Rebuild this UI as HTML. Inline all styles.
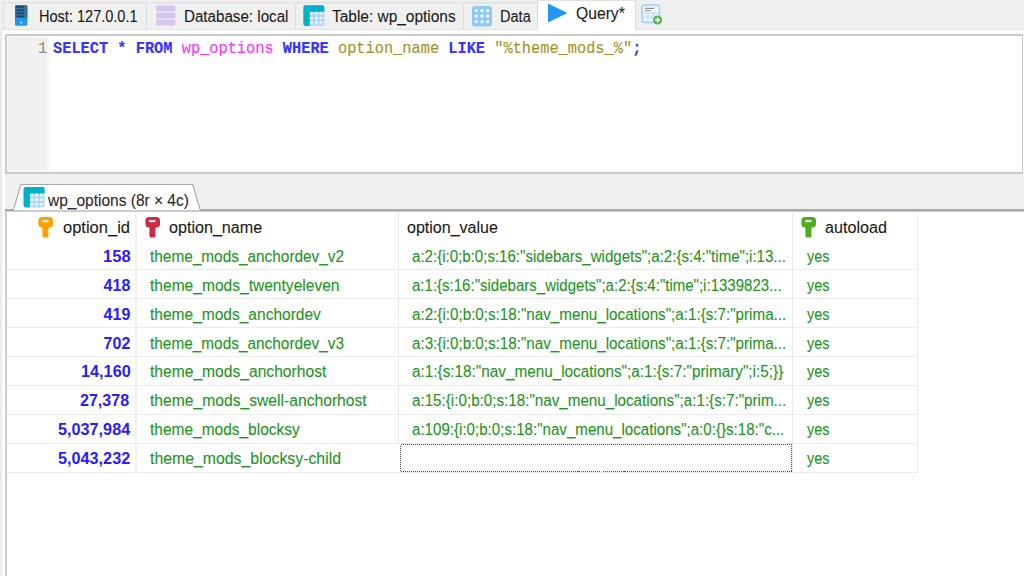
<!DOCTYPE html>
<html><head><meta charset='utf-8'>
<style>
html,body{margin:0;padding:0;width:1024px;height:576px;overflow:hidden;background:#fff;position:relative}
.t{position:absolute;white-space:pre;line-height:40px;height:40px;font-family:"Liberation Sans",sans-serif;transform-origin:0 0;-webkit-text-stroke:0.1px currentColor}
.a{position:absolute}
</style></head><body>
<!-- tab bar -->
<div class='a' style='left:0;top:0;width:1024px;height:30px;background:#efefef'></div>
<div class='a' style='left:0;top:29px;width:1024px;height:1px;background:#e3e3e3'></div>
<!-- inactive tabs strip -->
<div class='a' style='left:3px;top:2px;width:535px;height:27px;background:#f0f0f0;border-top:1px solid #e0e0e0;border-left:1px solid #dedede;box-sizing:border-box'></div>
<div class='a' style='left:4px;top:3px;width:534px;height:1px;background:#e9e9e9'></div>
<div class='a' style='left:146px;top:4px;width:1px;height:25px;background:#dcdcdc'></div>
<div class='a' style='left:295px;top:4px;width:1px;height:25px;background:#dcdcdc'></div>
<div class='a' style='left:463px;top:4px;width:1px;height:25px;background:#dcdcdc'></div>
<!-- active tab -->
<div class='a' style='left:537px;top:0;width:99px;height:34px;background:#fff;border-left:1px solid #dadada;border-right:1px solid #dadada;border-top:1px solid #e0e0e0;box-sizing:border-box'></div>
<div class='a' style='left:538px;top:29px;width:97px;height:5px;background:#fff'></div>
<!-- white band & left strip -->
<div class='a' style='left:0;top:30px;width:1024px;height:4px;background:#fff'></div>
<div class='a' style='left:0;top:30px;width:2px;height:546px;background:#e9e9e9'></div>
<svg style='position:absolute;left:13.9px;top:4.3px' width='15' height='23' viewBox='-1 -1 15 23'>
<rect x='0' y='0' width='12.4' height='20.8' rx='1.6' fill='#2196f3'/>
<path d='M1.6 0 H10.8 Q12.4 0 12.4 1.6 V12.9 H0 V1.6 Q0 0 1.6 0 Z' fill='#2e70ad'/>
<rect x='1.6' y='1.20' width='8.2' height='1.8' fill='#2a4560'/><rect x='9.3' y='1.20' width='1.6' height='1.8' fill='#3f8f52'/><rect x='1.6' y='4.40' width='8.2' height='1.8' fill='#2a4560'/><rect x='9.3' y='4.40' width='1.6' height='1.8' fill='#3f8f52'/><rect x='1.6' y='7.50' width='8.2' height='1.8' fill='#2a4560'/><rect x='9.3' y='7.50' width='1.6' height='1.8' fill='#3f8f52'/><rect x='1.6' y='10.50' width='8.2' height='1.8' fill='#2a4560'/><rect x='9.3' y='10.50' width='1.6' height='1.8' fill='#3f8f52'/>
<circle cx='6.3' cy='17.6' r='1.2' fill='#9fd1fb'/>
</svg>
<svg style='position:absolute;left:156px;top:5px' width='20' height='21' viewBox='0 0 20 21'>
<rect x='0' y='0.5' width='19.5' height='6' rx='2' fill='#d5c6ee'/>
<rect x='0' y='7.5' width='19.5' height='6' rx='2' fill='#d5c6ee'/>
<rect x='0' y='14.5' width='19.5' height='6' rx='2' fill='#d5c6ee'/>
</svg>
<svg style='position:absolute;left:303px;top:5px' width='23' height='23' viewBox='-0.40 -0.30 23 23'>
<rect x='0' y='0' width='21' height='20.7' rx='2' fill='#b9ddf9'/>
<path d='M10.55 6.5 V20.7 M15.3 6.5 V20.7 M6.3 10.5 H21 M6.3 15.0 H21' stroke='#a6d2f7' stroke-width='0.8'/>
<path d='M2 0 H19 Q21 0 21 2 V6.5 H6.3 V20.7 H2 Q0 20.7 0 18.7 V2 Q0 0 2 0 Z' fill='#00b4cc'/>
<path d='M6.3 0 V6.5 M10.55 0 V6.5 M15.3 0 V6.5 M0 6.5 H6.3 M0 10.7 H6.3 M0 15.2 H6.3' stroke='#06a0b5' stroke-width='0.8'/>
<rect x='6.90' y='6.90' width='2.4' height='2.4' rx='0.4' fill='#f6fbff'/><rect x='11.80' y='6.90' width='2.4' height='2.4' rx='0.4' fill='#f6fbff'/><rect x='16.40' y='6.90' width='2.4' height='2.4' rx='0.4' fill='#f6fbff'/><rect x='6.90' y='11.60' width='2.4' height='2.4' rx='0.4' fill='#f6fbff'/><rect x='11.80' y='11.60' width='2.4' height='2.4' rx='0.4' fill='#f6fbff'/><rect x='16.40' y='11.60' width='2.4' height='2.4' rx='0.4' fill='#f6fbff'/><rect x='6.90' y='16.10' width='2.4' height='2.4' rx='0.4' fill='#f6fbff'/><rect x='11.80' y='16.10' width='2.4' height='2.4' rx='0.4' fill='#f6fbff'/><rect x='16.40' y='16.10' width='2.4' height='2.4' rx='0.4' fill='#f6fbff'/>
</svg>
<svg style='position:absolute;left:472px;top:5.5px' width='21' height='21' viewBox='0 0 21 21'>
<rect x='0' y='0' width='20' height='20.5' rx='3' fill='#8cc9f8'/>
<rect x='2.75' y='2.95' width='3.1' height='3.1' rx='0.6' fill='#eef7ff'/><rect x='8.45' y='2.95' width='3.1' height='3.1' rx='0.6' fill='#eef7ff'/><rect x='14.05' y='2.95' width='3.1' height='3.1' rx='0.6' fill='#eef7ff'/><rect x='2.75' y='8.55' width='3.1' height='3.1' rx='0.6' fill='#eef7ff'/><rect x='8.45' y='8.55' width='3.1' height='3.1' rx='0.6' fill='#eef7ff'/><rect x='14.05' y='8.55' width='3.1' height='3.1' rx='0.6' fill='#eef7ff'/><rect x='2.75' y='14.15' width='3.1' height='3.1' rx='0.6' fill='#eef7ff'/><rect x='8.45' y='14.15' width='3.1' height='3.1' rx='0.6' fill='#eef7ff'/><rect x='14.05' y='14.15' width='3.1' height='3.1' rx='0.6' fill='#eef7ff'/>
</svg>
<svg class='a' style='left:547px;top:3px' width='22' height='21' viewBox='0 0 22 21'><path d='M1 0.5 L20.5 10 L1 19.5 Z' fill='#2196f3'/></svg>
<svg style='position:absolute;left:641px;top:3.8px' width='24' height='24' viewBox='0 0 24 24'>
<rect x='1' y='1' width='17.5' height='17.5' rx='2.5' fill='#e9f4fd' stroke='#9ccffa' stroke-width='1.6'/>
<rect x='2' y='2.5' width='15.5' height='5.5' fill='#f4f4f4'/>
<rect x='4' y='3.8' width='9' height='1.2' fill='#8c8c8c'/>
<rect x='4' y='6' width='6' height='1.2' fill='#a0a0a0'/>
<rect x='1.5' y='8.5' width='16.5' height='1' fill='#b7dbf9'/>
<rect x='1.5' y='12.5' width='16.5' height='1' fill='#b7dbf9'/>
<rect x='6.5' y='8.5' width='1' height='9' fill='#b7dbf9'/>
<rect x='12' y='8.5' width='1' height='9' fill='#b7dbf9'/>
<circle cx='16.6' cy='16' r='4.5' fill='#56b656'/>
<path d='M16.6 13.6 V18.4 M14.2 16 H19' stroke='#fff' stroke-width='1.6'/>
</svg>
<!-- editor -->
<div class='a' style='left:5px;top:34px;width:1018px;height:140px;border:2px solid #c9c9ce;border-right-width:1px;box-sizing:border-box;background:#fff'></div>
<div class='a' style='left:7px;top:36px;width:40px;height:136px;background:#f0f0f0;border-top:1px solid #fafafa;border-left:1px solid #fafafa;box-sizing:border-box'></div>
<div class='a' style='left:47px;top:36px;width:3px;height:136px;background:#f7f7f7'></div>
<div class='a' style='left:7px;top:169px;width:40px;height:3px;background:#f4f4f4'></div>
<div class='t' id='ln' style='font-family:"Liberation Mono",monospace;font-size:17px;color:#8a8a8a;left:38.4px;top:29px;transform:scaleX(0.901);-webkit-text-stroke:0'>1</div>
<div class='t' id='sql' style='font-family:"Liberation Mono",monospace;font-size:17px;left:53px;top:29px;transform:scaleX(0.901);-webkit-text-stroke:0.15px currentColor'><span style='color:#3535ff;font-weight:700'>SELECT</span> <span style='color:#3535ff;font-weight:700'>*</span> <span style='color:#3535ff;font-weight:700'>FROM</span> <span style='color:#ff33ff'>wp_options</span> <span style='color:#3535ff;font-weight:700'>WHERE</span> <span style='color:#a0962a'>option_name</span> <span style='color:#3535ff;font-weight:700'>LIKE</span> <span style='color:#a0962a'>&quot;%theme_mods_%&quot;</span><span style='color:#3535ff;font-weight:700'>;</span></div>
<!-- gap -->
<div class='a' style='left:5px;top:174px;width:1019px;height:36px;background:#f0f0f0'></div>
<!-- grid frame -->
<div class='a' style='left:5px;top:210px;width:1019px;height:366px;background:#fff;border-left:2px solid #cbcbd0;border-top:2px solid #cbcbd0;box-sizing:border-box'></div>
<div class='a' style='left:5px;top:209px;width:1019px;height:2px;background:#a9a9a9'></div>
<!-- results tab -->
<svg class='a' style='left:10px;top:183px' width='195' height='30' viewBox='0 0 195 30'>
<path d='M3.6 26 L10.8 1.5 H182.8 L190 26 V27 H3.6 Z' fill='#fff'/>
<path d='M3.6 26.5 L10.8 1.5 H182.8 L190 26.5' fill='none' stroke='#a8a8a8' stroke-width='1.1'/>
<rect x='4' y='27' width='186' height='1' fill='#cbcbd0'/>
</svg>
<svg style='position:absolute;left:23px;top:186px' width='23' height='23' viewBox='-0.60 -0.90 23 23'>
<rect x='0' y='0' width='21' height='20.7' rx='2' fill='#b9ddf9'/>
<path d='M10.55 6.5 V20.7 M15.3 6.5 V20.7 M6.3 10.5 H21 M6.3 15.0 H21' stroke='#a6d2f7' stroke-width='0.8'/>
<path d='M2 0 H19 Q21 0 21 2 V6.5 H6.3 V20.7 H2 Q0 20.7 0 18.7 V2 Q0 0 2 0 Z' fill='#00b4cc'/>
<path d='M6.3 0 V6.5 M10.55 0 V6.5 M15.3 0 V6.5 M0 6.5 H6.3 M0 10.7 H6.3 M0 15.2 H6.3' stroke='#06a0b5' stroke-width='0.8'/>
<rect x='6.90' y='6.90' width='2.4' height='2.4' rx='0.4' fill='#f6fbff'/><rect x='11.80' y='6.90' width='2.4' height='2.4' rx='0.4' fill='#f6fbff'/><rect x='16.40' y='6.90' width='2.4' height='2.4' rx='0.4' fill='#f6fbff'/><rect x='6.90' y='11.60' width='2.4' height='2.4' rx='0.4' fill='#f6fbff'/><rect x='11.80' y='11.60' width='2.4' height='2.4' rx='0.4' fill='#f6fbff'/><rect x='16.40' y='11.60' width='2.4' height='2.4' rx='0.4' fill='#f6fbff'/><rect x='6.90' y='16.10' width='2.4' height='2.4' rx='0.4' fill='#f6fbff'/><rect x='11.80' y='16.10' width='2.4' height='2.4' rx='0.4' fill='#f6fbff'/><rect x='16.40' y='16.10' width='2.4' height='2.4' rx='0.4' fill='#f6fbff'/>
</svg>
<div style='position:absolute;left:7px;top:269.0px;width:910px;height:1px;background:#ececec'></div>
<div style='position:absolute;left:7px;top:298.0px;width:910px;height:1px;background:#ececec'></div>
<div style='position:absolute;left:7px;top:327.0px;width:910px;height:1px;background:#ececec'></div>
<div style='position:absolute;left:7px;top:356.0px;width:910px;height:1px;background:#ececec'></div>
<div style='position:absolute;left:7px;top:385.0px;width:910px;height:1px;background:#ececec'></div>
<div style='position:absolute;left:7px;top:414.0px;width:910px;height:1px;background:#ececec'></div>
<div style='position:absolute;left:7px;top:443.0px;width:910px;height:1px;background:#ececec'></div>
<div style='position:absolute;left:7px;top:472.0px;width:910px;height:1px;background:#ececec'></div>
<div style='position:absolute;left:135px;top:213px;width:2px;height:260px;background:#f1f1f1'></div>
<div style='position:absolute;left:398px;top:213px;width:1px;height:260px;background:#ebebeb'></div>
<div style='position:absolute;left:792px;top:213px;width:1px;height:260px;background:#ebebeb'></div>
<div style='position:absolute;left:916.5px;top:213px;width:1px;height:260px;background:#ebebeb'></div>
<svg style='position:absolute;left:38px;top:217px' width='16' height='21' viewBox='0 0 16 21'>
<rect x='0.4' y='0' width='14.6' height='10.6' rx='3.6' fill='#ffa000'/>
<rect x='3.9' y='2.9' width='6.8' height='2.3' rx='1.15' fill='#fff' opacity='0.9'/>
<path d='M4.4 9 H10.6 V13 L9.9 13.7 L10.6 14.4 V15.5 L9.9 16.2 L10.6 16.9 V18.4 Q10.6 20.6 7.5 20.6 Q4.4 20.6 4.4 18.4 Z' fill='#ffa000'/>
</svg>
<svg style='position:absolute;left:145px;top:217px' width='16' height='21' viewBox='0 0 16 21'>
<rect x='0.4' y='0' width='14.6' height='10.6' rx='3.6' fill='#cc2b45'/>
<rect x='3.9' y='2.9' width='6.8' height='2.3' rx='1.15' fill='#fff' opacity='0.9'/>
<path d='M4.4 9 H10.6 V13 L9.9 13.7 L10.6 14.4 V15.5 L9.9 16.2 L10.6 16.9 V18.4 Q10.6 20.6 7.5 20.6 Q4.4 20.6 4.4 18.4 Z' fill='#cc2b45'/>
</svg>
<svg style='position:absolute;left:801px;top:217px' width='16' height='21' viewBox='0 0 16 21'>
<rect x='0.4' y='0' width='14.6' height='10.6' rx='3.6' fill='#4caf1d'/>
<rect x='3.9' y='2.9' width='6.8' height='2.3' rx='1.15' fill='#fff' opacity='0.9'/>
<path d='M4.4 9 H10.6 V13 L9.9 13.7 L10.6 14.4 V15.5 L9.9 16.2 L10.6 16.9 V18.4 Q10.6 20.6 7.5 20.6 Q4.4 20.6 4.4 18.4 Z' fill='#4caf1d'/>
</svg>
<div class='a' style='left:398px;top:444px;width:2px;height:28px;background:#fff'></div>
<svg class='a' style='left:400px;top:444px' width='392' height='28' viewBox='0 0 392 28' shape-rendering='crispEdges'>
<rect x='0.5' y='0.5' width='391' height='27' fill='none' stroke='#4a4a4a' stroke-width='1' stroke-dasharray='1 1'/>
</svg>
<div class='t' style='left:39.39px;top:-3px;font-size:16px;font-weight:400;color:#1b1b1b;transform:scaleX(0.9084)'>Host: 127.0.0.1</div>
<div class='t' style='left:183.80px;top:-3px;font-size:16px;font-weight:400;color:#1b1b1b;transform:scaleX(0.9468)'>Database: local</div>
<div class='t' style='left:332.00px;top:-3px;font-size:16px;font-weight:400;color:#1b1b1b;transform:scaleX(0.9656)'>Table: wp_options</div>
<div class='t' style='left:500.09px;top:-3px;font-size:16px;font-weight:400;color:#1b1b1b;transform:scaleX(0.9091)'>Data</div>
<div class='t' style='left:576.02px;top:-6px;font-size:16px;font-weight:400;color:#1b1b1b;transform:scaleX(0.9796)'>Query*</div>
<div class='t' style='left:47.50px;top:181px;font-size:16px;font-weight:400;color:#2a2a2a;transform:scaleX(0.9690)'>wp_options (8r × 4c)</div>
<div class='t' style='left:62.97px;top:208px;font-size:16px;font-weight:400;color:#1b1b1b;transform:scaleX(1.0317)'>option_id</div>
<div class='t' style='left:168.99px;top:208px;font-size:16px;font-weight:400;color:#1b1b1b;transform:scaleX(1.0066)'>option_name</div>
<div class='t' style='left:406.75px;top:208px;font-size:16px;font-weight:400;color:#1b1b1b;transform:scaleX(1.0017)'>option_value</div>
<div class='t' style='left:825.49px;top:208px;font-size:16px;font-weight:400;color:#1b1b1b;transform:scaleX(1.0083)'>autoload</div>
<div class='t' style='left:102.72px;top:237px;font-size:16px;font-weight:700;color:#2a1cff;transform:scaleX(1.0340);-webkit-text-stroke:0'>158</div>
<div class='t' style='left:149.75px;top:237px;font-size:16px;font-weight:400;color:#239523;transform:scaleX(0.9614)'>theme_mods_anchordev_v2</div>
<div class='t' style='left:411.86px;top:237px;font-size:16px;font-weight:400;color:#239523;transform:scaleX(0.9415)'>a:2:{i:0;b:0;s:16:&quot;sidebars_widgets&quot;;a:2:{s:4:&quot;time&quot;;i:13...</div>
<div class='t' style='left:806.50px;top:237px;font-size:16px;font-weight:400;color:#239523;transform:scaleX(0.9000)'>yes</div>
<div class='t' style='left:103.60px;top:266px;font-size:16px;font-weight:700;color:#2a1cff;transform:scaleX(1.0000);-webkit-text-stroke:0'>418</div>
<div class='t' style='left:149.75px;top:266px;font-size:16px;font-weight:400;color:#239523;transform:scaleX(0.9729)'>theme_mods_twentyeleven</div>
<div class='t' style='left:411.86px;top:266px;font-size:16px;font-weight:400;color:#239523;transform:scaleX(0.9391)'>a:1:{s:16:&quot;sidebars_widgets&quot;;a:2:{s:4:&quot;time&quot;;i:1339823...</div>
<div class='t' style='left:806.50px;top:266px;font-size:16px;font-weight:400;color:#239523;transform:scaleX(0.9000)'>yes</div>
<div class='t' style='left:103.60px;top:295px;font-size:16px;font-weight:700;color:#2a1cff;transform:scaleX(1.0000);-webkit-text-stroke:0'>419</div>
<div class='t' style='left:149.75px;top:295px;font-size:16px;font-weight:400;color:#239523;transform:scaleX(0.9702)'>theme_mods_anchordev</div>
<div class='t' style='left:411.85px;top:295px;font-size:16px;font-weight:400;color:#239523;transform:scaleX(0.9495)'>a:2:{i:0;b:0;s:18:&quot;nav_menu_locations&quot;;a:1:{s:7:&quot;prima...</div>
<div class='t' style='left:806.50px;top:295px;font-size:16px;font-weight:400;color:#239523;transform:scaleX(0.9000)'>yes</div>
<div class='t' style='left:103.60px;top:324px;font-size:16px;font-weight:700;color:#2a1cff;transform:scaleX(1.0000);-webkit-text-stroke:0'>702</div>
<div class='t' style='left:149.75px;top:324px;font-size:16px;font-weight:400;color:#239523;transform:scaleX(0.9614)'>theme_mods_anchordev_v3</div>
<div class='t' style='left:411.85px;top:324px;font-size:16px;font-weight:400;color:#239523;transform:scaleX(0.9495)'>a:3:{i:0;b:0;s:18:&quot;nav_menu_locations&quot;;a:1:{s:7:&quot;prima...</div>
<div class='t' style='left:806.50px;top:324px;font-size:16px;font-weight:400;color:#239523;transform:scaleX(0.9000)'>yes</div>
<div class='t' style='left:80.78px;top:352px;font-size:16px;font-weight:700;color:#2a1cff;transform:scaleX(1.0170);-webkit-text-stroke:0'>14,160</div>
<div class='t' style='left:149.75px;top:352px;font-size:16px;font-weight:400;color:#239523;transform:scaleX(0.9764)'>theme_mods_anchorhost</div>
<div class='t' style='left:411.84px;top:352px;font-size:16px;font-weight:400;color:#239523;transform:scaleX(0.9561)'>a:1:{s:18:&quot;nav_menu_locations&quot;;a:1:{s:7:&quot;primary&quot;;i:5;}}</div>
<div class='t' style='left:806.50px;top:352px;font-size:16px;font-weight:400;color:#239523;transform:scaleX(0.9000)'>yes</div>
<div class='t' style='left:80.40px;top:381px;font-size:16px;font-weight:700;color:#2a1cff;transform:scaleX(1.0041);-webkit-text-stroke:0'>27,378</div>
<div class='t' style='left:149.75px;top:381px;font-size:16px;font-weight:400;color:#239523;transform:scaleX(0.9785)'>theme_mods_swell-anchorhost</div>
<div class='t' style='left:411.85px;top:381px;font-size:16px;font-weight:400;color:#239523;transform:scaleX(0.9495)'>a:15:{i:0;b:0;s:18:&quot;nav_menu_locations&quot;;a:1:{s:7:&quot;prim...</div>
<div class='t' style='left:806.50px;top:381px;font-size:16px;font-weight:400;color:#239523;transform:scaleX(0.9000)'>yes</div>
<div class='t' style='left:57.59px;top:410px;font-size:16px;font-weight:700;color:#2a1cff;transform:scaleX(1.0143);-webkit-text-stroke:0'>5,037,984</div>
<div class='t' style='left:149.75px;top:410px;font-size:16px;font-weight:400;color:#239523;transform:scaleX(0.9677)'>theme_mods_blocksy</div>
<div class='t' style='left:411.86px;top:410px;font-size:16px;font-weight:400;color:#239523;transform:scaleX(0.9444)'>a:109:{i:0;b:0;s:18:&quot;nav_menu_locations&quot;;a:0:{}s:18:&quot;c...</div>
<div class='t' style='left:806.50px;top:410px;font-size:16px;font-weight:400;color:#239523;transform:scaleX(0.9000)'>yes</div>
<div class='t' style='left:57.59px;top:439px;font-size:16px;font-weight:700;color:#2a1cff;transform:scaleX(1.0143);-webkit-text-stroke:0'>5,043,232</div>
<div class='t' style='left:149.75px;top:439px;font-size:16px;font-weight:400;color:#239523;transform:scaleX(0.9896)'>theme_mods_blocksy-child</div>
<div class='t' style='left:806.50px;top:439px;font-size:16px;font-weight:400;color:#239523;transform:scaleX(0.9000)'>yes</div>
</body></html>
